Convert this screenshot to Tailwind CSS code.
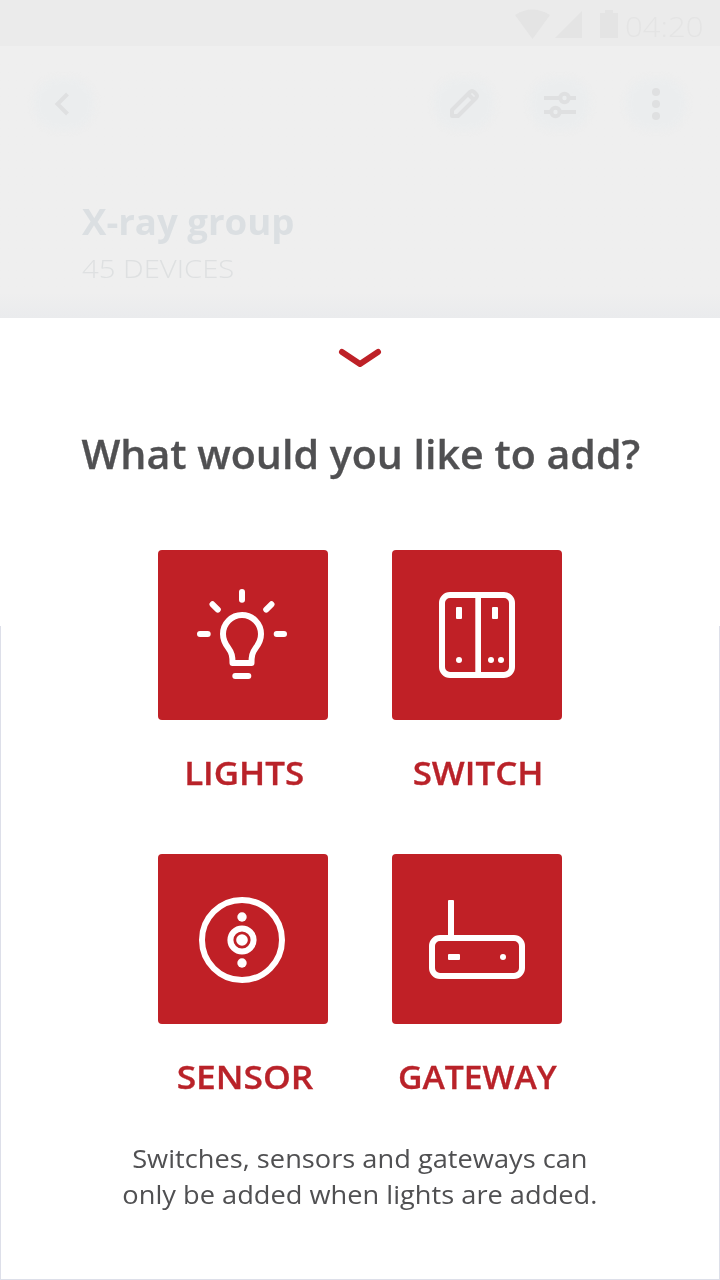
<!DOCTYPE html>
<html lang="en">
<head>
<meta charset="utf-8">
<title>Add device</title>
<script src="https://cdn.jsdelivr.net/npm/@tailwindcss/browser@4"></script>
</head>
<body class="w-[720px] h-[1280px] overflow-hidden bg-white font-['Open_Sans','Noto_Sans',sans-serif]">
<div class="relative flex h-[1280px] w-[720px] flex-col">
  <header class="flex h-[318px] flex-col bg-[#efefef] bg-linear-to-b from-[#efefef] from-92% to-[#eaebed]">
    <div class="flex h-[46px] items-center justify-end bg-[#ebebeb] pr-[24px] text-[#e4e4e4]">
      <svg class="h-[46px] w-[110px]" viewBox="514 0 110 46" fill="currentColor"><path d="M515 15Q532 4 550 15L532.500 39ZM555 38 582 11V38ZM600 13h5v-3h8v3h5v25h-18Z"/></svg>
      <span class="mt-[5px] w-[72px] origin-left scale-x-[1.11] whitespace-nowrap pl-px text-[28px] font-light leading-none">04:20</span>
    </div>
    <nav class="flex h-[116px] items-center justify-between pl-8 pr-8 text-[#dfe0e1]">
      <span class="grid h-[64px] w-[64px] place-items-center">
        <span class="col-start-1 row-start-1 h-[52px] w-[60px] rounded-3xl bg-[#ebedee] blur-[3px]"></span>
        <svg class="z-10 col-start-1 row-start-1 size-16" viewBox="0 0 64 64" fill="none" stroke="currentColor" stroke-width="4"><path d="m35.500 22-10 10 10 10"/></svg>
      </span>
      <div class="flex gap-8">
        <span class="grid h-[64px] w-[64px] place-items-center">
          <span class="col-start-1 row-start-1 h-[52px] w-[60px] rounded-3xl bg-[#ebedee] blur-[3px]"></span>
          <svg class="z-10 col-start-1 row-start-1 size-16" viewBox="0 0 64 64" fill="none" stroke="currentColor" stroke-width="4" stroke-linejoin="round"><path d="M20 44v-6l18-18q2-2 4 0l2 2q2 2 0 4L26 44ZM36 22l6 6"/></svg>
        </span>
        <span class="grid h-[64px] w-[64px] place-items-center">
          <span class="col-start-1 row-start-1 h-[52px] w-[60px] rounded-3xl bg-[#ebedee] blur-[3px]"></span>
          <svg class="z-10 col-start-1 row-start-1 size-16" viewBox="0 0 64 64" fill="none" stroke="currentColor" stroke-width="4"><path d="M16 26h16m9 0h7M16 40h7m9 0h16"/><circle cx="36.500" cy="26" r="4.200"/><circle cx="27.500" cy="40" r="4.200"/></svg>
        </span>
        <span class="grid h-[64px] w-[64px] place-items-center">
          <span class="col-start-1 row-start-1 h-[52px] w-[60px] rounded-3xl bg-[#ebedee] blur-[3px]"></span>
          <svg class="z-10 col-start-1 row-start-1 size-16" viewBox="0 0 64 64" fill="currentColor"><circle cx="32" cy="20" r="4"/><circle cx="32" cy="32" r="4"/><circle cx="32" cy="44" r="4"/></svg>
        </span>
      </div>
    </nav>
    <div class="flex flex-col items-start pl-[82px] pt-[38px]">
      <h2 class="h-[47px] origin-left scale-x-[1.046] whitespace-nowrap text-[35px] font-bold leading-[44px] text-[#dbdfe2]">X-ray group</h2>
      <p class="origin-left scale-x-[1.125] whitespace-nowrap text-[26px] font-light leading-[42px] text-[#dee0e1]">45 DEVICES</p>
    </div>
  </header>
  <main class="flex flex-1 flex-col items-center bg-white">
    <svg class="mt-[25px] h-[30px] w-[50px]" viewBox="335 343 50 30" fill="none" stroke="#be2127" stroke-width="6" stroke-linecap="round" stroke-linejoin="round"><path d="m342 352 18 12 18-12"/></svg>
    <h1 class="mt-[51px] scale-x-[1.028] whitespace-nowrap pl-px text-[40px] font-semibold leading-[60px] text-[#505052] [-webkit-text-stroke:0.3px_#505052]">What would you like to add?</h1>
    <section class="mt-[66px] grid grid-cols-[170px_170px] gap-x-16 text-white">
      <div class="flex h-[304px] flex-col items-center">
        <div class="size-[170px] rounded bg-[#c02026]">
          <svg class="size-[170px]" viewBox="0 0 170 170" fill="none" stroke="currentColor" stroke-width="6" stroke-linecap="round" stroke-linejoin="round"><path d="M84 42v7.700M42 84h7.700M118.700 84h7.300M54.500 54.300l5.300 5.300M113.500 54.300l-5.300 5.300M77.300 126h13M74.500 113c0-7-.500-10-4.500-15.500-3-4-5-8.500-5-13.500a19 19 0 0 1 38 0c0 5-2 9.500-5 13.500-4 5.500-4.500 8.500-4.500 15.500Z"/></svg>
        </div>
        <span class="mt-[31px] scale-x-[1.09] whitespace-nowrap pl-[2px] text-[32px] font-semibold leading-[44px] [-webkit-text-stroke:0.3px_#b92229] text-[#b92229]">LIGHTS</span>
      </div>
      <div class="flex h-[304px] flex-col items-center">
        <div class="size-[170px] rounded bg-[#c02026]">
          <svg class="size-[170px]" viewBox="0 0 170 170" fill="currentColor"><rect x="50" y="45" width="70" height="80" rx="8" fill="none" stroke="currentColor" stroke-width="6"/><path d="M83.300 45H89v80h-5.700Z"/><rect x="64" y="57" width="6" height="12" rx="1"/><rect x="100" y="57" width="6" height="12" rx="1"/><circle cx="67" cy="110" r="3"/><circle cx="99" cy="110" r="3"/><circle cx="109" cy="110" r="3"/></svg>
        </div>
        <span class="mt-[31px] scale-x-[1.09] whitespace-nowrap pl-[2px] text-[32px] font-semibold leading-[44px] [-webkit-text-stroke:0.3px_#b92229] text-[#b92229]">SWITCH</span>
      </div>
      <div class="flex h-[250px] flex-col items-center">
        <div class="size-[170px] rounded bg-[#c02026]">
          <svg class="size-[170px]" viewBox="0 0 170 170" fill="currentColor"><g fill="none" stroke="currentColor" stroke-width="6"><circle cx="84" cy="86" r="40"/><circle cx="84" cy="86" r="11.600"/></g><circle cx="84" cy="86" r="5.800"/><circle cx="84" cy="63" r="4.700"/><circle cx="84" cy="109" r="4.700"/></svg>
        </div>
        <span class="mt-[31px] scale-x-[1.105] whitespace-nowrap pl-[3px] text-[32px] font-semibold leading-[44px] [-webkit-text-stroke:0.3px_#b92229] text-[#b92229]">SENSOR</span>
      </div>
      <div class="flex h-[250px] flex-col items-center">
        <div class="size-[170px] rounded bg-[#c02026]">
          <svg class="size-[170px]" viewBox="0 0 170 170" fill="currentColor"><rect x="40" y="84" width="90" height="38" rx="8" fill="none" stroke="currentColor" stroke-width="6"/><rect x="56" y="46" width="6" height="38" rx="1"/><rect x="56" y="100" width="12" height="6" rx="1"/><circle cx="111" cy="103" r="3"/></svg>
        </div>
        <span class="mt-[31px] scale-x-[1.055] whitespace-nowrap pl-[1px] text-[32px] font-semibold leading-[44px] [-webkit-text-stroke:0.3px_#b92229] text-[#b92229]">GATEWAY</span>
      </div>
    </section>
    <p class="mt-[36px] scale-x-[1.047] whitespace-nowrap text-center text-[26px] font-normal leading-[36px] text-[#505052]">Switches, sensors and gateways can<br>only be added when lights are added.</p>
  </main>
  <div class="absolute bottom-0 left-0 h-[654px] w-[720px] border-x border-b border-[#dddfe9]"></div>
</div>
</body>
</html>
